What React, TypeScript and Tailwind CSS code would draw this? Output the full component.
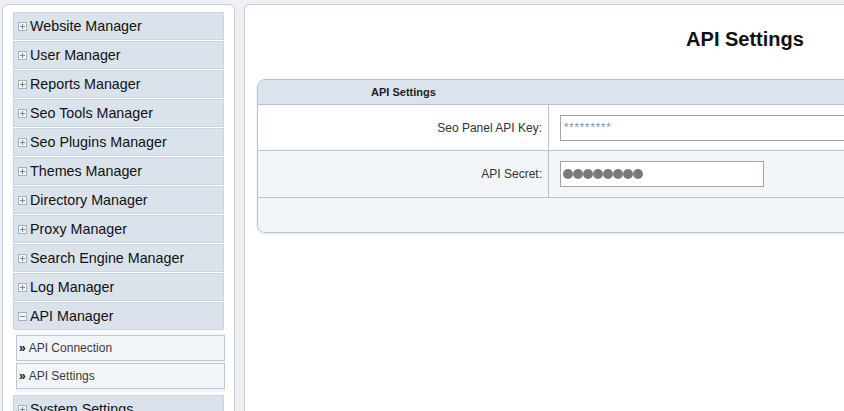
const menu = [
  "Website Manager",
  "User Manager",
  "Reports Manager",
  "Seo Tools Manager",
  "Seo Plugins Manager",
  "Themes Manager",
  "Directory Manager",
  "Proxy Manager",
  "Search Engine Manager",
  "Log Manager",
];

function Toggle({ open }: { open?: boolean }) {
  return (
    <svg width="9" height="9" viewBox="0 0 9 9" className="shrink-0">
      <rect x="0.5" y="0.5" width="8" height="8" fill="#f4f6f8" stroke="#a9b1b9" />
      <line x1="2" y1="4.5" x2="7" y2="4.5" stroke="#7d868f" />
      {!open && <line x1="4.5" y1="2" x2="4.5" y2="7" stroke="#7d868f" />}
    </svg>
  );
}

function MenuItem({ label, open }: { label: string; open?: boolean }) {
  return (
    <div className="h-[28px] mb-[1px] flex items-center gap-[3px] pl-[4px] bg-[#dae3ec] border border-[#c9d4de] text-[14.3px] text-[#111]">
      <Toggle open={open} />
      <span className="leading-none">{label}</span>
    </div>
  );
}

function SubItem({ label }: { label: string }) {
  return (
    <div className="h-[26px] mb-[2px] flex items-center pl-[2px] bg-[#f3f6f9] border border-[#b9c9d5] text-[12px] text-[#3a3a3a]">
      <span className="font-bold text-[12px] text-[#111] mr-[3px]">»</span>
      {label}
    </div>
  );
}

export default function App() {
  return (
    <div
      className="w-[844px] h-[411px] overflow-hidden bg-[#edf0f4] flex items-start pt-[4px] pl-[2px]"
      style={{ fontFamily: '"Liberation Sans", Arial, sans-serif' }}
    >
      {/* sidebar */}
      <div className="w-[233px] h-[420px] shrink-0 bg-white border border-[#c9ccd0] rounded-[6px] pt-[7px] pl-[10px] pr-[10px]">
        {menu.map((m) => (
          <MenuItem key={m} label={m} />
        ))}
        <MenuItem label="API Manager" open />
        <div className="mt-[3px] ml-[3px] mr-[-1px] pt-[2px] pb-[1px] bg-[#f3f6f9]">
          <SubItem label="API Connection" />
          <SubItem label="API Settings" />
        </div>
        <div className="mt-[3px]">
          <MenuItem label="System Settings" />
        </div>
      </div>

      {/* content */}
      <div className="ml-[9px] w-[1000px] h-[420px] shrink-0 bg-white border border-[#c9ccd0] rounded-[6px] pl-[12px] pr-[10px]">
        <h1 className="text-center text-[20px] font-bold text-[#111] mt-[22px] mb-[28px] leading-[24px]">
          API Settings
        </h1>

        <div className="border border-[#b3c5d3] rounded-[8px] shadow-[0_1px_3px_rgba(0,0,0,0.12)] overflow-hidden">
          <div className="h-[25px] bg-[#dbe4ed] border-b border-[#b3c5d3] flex">
            <div className="w-[291px] text-center text-[11px] font-bold text-[#222] leading-[24px]">
              API Settings
            </div>
          </div>
          <div className="h-[46px] flex bg-white border-b border-[#b3c5d3]">
            <div className="w-[291px] border-r border-[#b3c5d3] flex items-center justify-end pr-[6px] text-[12px] text-[#333]">
              Seo Panel API Key:
            </div>
            <div className="flex items-center pl-[11px]">
              <div className="w-[400px] h-[26px] border border-[#a3a3a3] bg-white flex items-center pl-[3px] text-[11px] text-[#6f8fb5] tracking-[1px]">
                *********
              </div>
            </div>
          </div>
          <div className="h-[47px] flex bg-[#f3f6f9] border-b border-[#b3c5d3]">
            <div className="w-[291px] border-r border-[#b3c5d3] flex items-center justify-end pr-[6px] text-[12px] text-[#333]">
              API Secret:
            </div>
            <div className="flex items-center pl-[11px]">
              <div className="w-[204px] h-[26px] border border-[#a3a3a3] bg-white flex items-center pl-[2px]">
                {Array.from({ length: 8 }).map((_, i) => (
                  <span key={i} className="w-[10px] h-[10px] rounded-full bg-[#7a7a7a]" />
                ))}
              </div>
            </div>
          </div>
          <div className="h-[34px] bg-[#f3f6f9]" />
        </div>
      </div>
    </div>
  );
}
